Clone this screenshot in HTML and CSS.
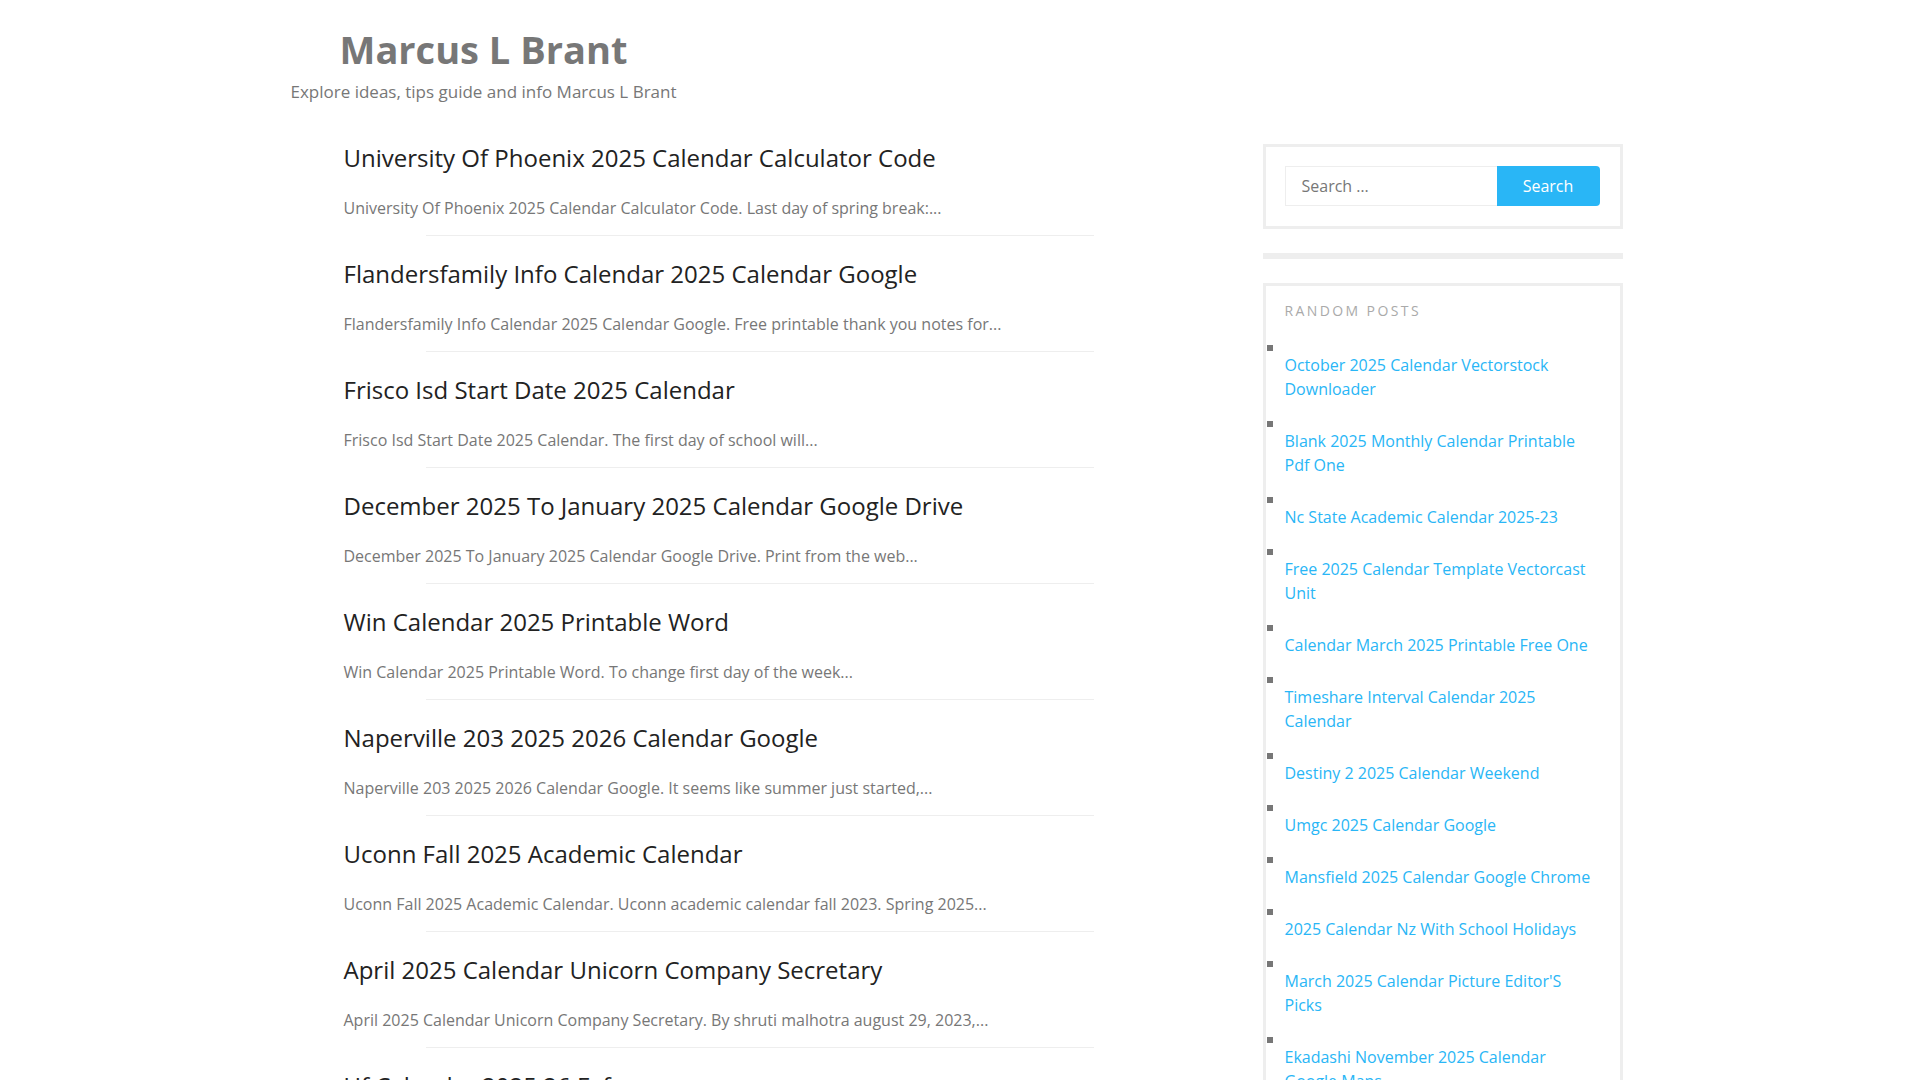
FILE: index.html
```html
<!DOCTYPE html>
<html>
<head>
    <meta charset="utf-8" />
    <title>Marcus L Brant</title>
    <link rel="stylesheet" href="styles.css">
</head>
<body>
    <div class="site">
        <header class="site-header">
            <div class="branding">
                <h1 class="site-title"><a href="#">Marcus L Brant</a></h1>
                <p class="site-description">Explore ideas, tips guide and info Marcus L Brant</p>
            </div>
        </header>

        <div class="content">
            <main class="main">
                <article class="post">
                    <h2 class="post-title"><a href="#">University Of Phoenix 2025 Calendar Calculator Code</a></h2>
                    <p class="post-excerpt">University Of Phoenix 2025 Calendar Calculator Code. Last day of spring break:...</p>
                </article>
                <article class="post">
                    <h2 class="post-title"><a href="#">Flandersfamily Info Calendar 2025 Calendar Google</a></h2>
                    <p class="post-excerpt">Flandersfamily Info Calendar 2025 Calendar Google. Free printable thank you notes for...</p>
                </article>
                <article class="post">
                    <h2 class="post-title"><a href="#">Frisco Isd Start Date 2025 Calendar</a></h2>
                    <p class="post-excerpt">Frisco Isd Start Date 2025 Calendar. The first day of school will...</p>
                </article>
                <article class="post">
                    <h2 class="post-title"><a href="#">December 2025 To January 2025 Calendar Google Drive</a></h2>
                    <p class="post-excerpt">December 2025 To January 2025 Calendar Google Drive. Print from the web...</p>
                </article>
                <article class="post">
                    <h2 class="post-title"><a href="#">Win Calendar 2025 Printable Word</a></h2>
                    <p class="post-excerpt">Win Calendar 2025 Printable Word. To change first day of the week...</p>
                </article>
                <article class="post">
                    <h2 class="post-title"><a href="#">Naperville 203 2025 2026 Calendar Google</a></h2>
                    <p class="post-excerpt">Naperville 203 2025 2026 Calendar Google. It seems like summer just started,...</p>
                </article>
                <article class="post">
                    <h2 class="post-title"><a href="#">Uconn Fall 2025 Academic Calendar</a></h2>
                    <p class="post-excerpt">Uconn Fall 2025 Academic Calendar. Uconn academic calendar fall 2023. Spring 2025...</p>
                </article>
                <article class="post">
                    <h2 class="post-title"><a href="#">April 2025 Calendar Unicorn Company Secretary</a></h2>
                    <p class="post-excerpt">April 2025 Calendar Unicorn Company Secretary. By shruti malhotra august 29, 2023,...</p>
                </article>
                <article class="post">
                    <h2 class="post-title"><a href="#">Uf Calendar 2025 26 Fafsa</a></h2>
                    <p class="post-excerpt">Uf Calendar 2025 26 Fafsa. The academic year calendar for students...</p>
                </article>
            </main>

            <aside class="sidebar">
                <section class="widget widget-search">
                    <form class="search-form">
                        <input type="search" class="search-field" placeholder="Search &hellip;">
                        <button type="submit" class="search-submit">Search</button>
                    </form>
                </section>

                <div class="widget-divider"></div>

                <section class="widget widget-random">
                    <h3 class="widget-title">Random Posts</h3>
                    <ul class="random-list">
                        <li><i class="sq"></i><a href="#">October 2025 Calendar Vectorstock Downloader</a></li>
                        <li><i class="sq"></i><a href="#">Blank 2025 Monthly Calendar Printable Pdf One</a></li>
                        <li><i class="sq"></i><a href="#">Nc State Academic Calendar 2025-23</a></li>
                        <li><i class="sq"></i><a href="#">Free 2025 Calendar Template Vectorcast Unit</a></li>
                        <li><i class="sq"></i><a href="#">Calendar March 2025 Printable Free One</a></li>
                        <li><i class="sq"></i><a href="#">Timeshare Interval Calendar 2025 Calendar</a></li>
                        <li><i class="sq"></i><a href="#">Destiny 2 2025 Calendar Weekend</a></li>
                        <li><i class="sq"></i><a href="#">Umgc 2025 Calendar Google</a></li>
                        <li><i class="sq"></i><a href="#">Mansfield 2025 Calendar Google Chrome</a></li>
                        <li><i class="sq"></i><a href="#">2025 Calendar Nz With School Holidays</a></li>
                        <li><i class="sq"></i><a href="#">March 2025 Calendar Picture Editor'S Picks</a></li>
                        <li><i class="sq"></i><a href="#">Ekadashi November 2025 Calendar Google Maps</a></li>
                    </ul>
                </section>
            </aside>
        </div>
    </div>
</body>
</html>
```

FILE: styles.css
```css
body {
    margin: 0;
    padding: 0 15px 0 0;
    font-family: "Open Sans", "Liberation Sans", sans-serif;
    color: #222;
    background: #fff;
}
a {
    color: inherit;
    text-decoration: none;
}
.site {
    width: 1340px;
    margin: 0 auto;
}

/* header */
.site-header {
    padding-top: 26px;
}
.branding {
    width: 402px;
    text-align: center;
    white-space: nowrap;
}
.site-title {
    margin: 0;
    font-size: 38px;
    line-height: 46px;
    font-weight: 700;
    color: #777;
}
.site-description {
    margin: 7px 0 0;
    font-size: 17px;
    line-height: 26px;
    color: #777;
}

/* layout */
.content {
    display: flex;
    align-items: flex-start;
    margin-top: 35px;
}
.main {
    flex: 1;
    padding: 0 87px 0 61px;
}
.sidebar {
    width: 360px;
    margin-top: 4px;
}

/* posts */
.post {
    padding-bottom: 15px;
    margin-bottom: 20px;
    position: relative;
}
.post::after {
    content: "";
    display: block;
    height: 1px;
    background: #eee;
    margin: 0 82px;
    position: relative;
    top: 15px;
}
.post-title {
    margin: 0;
    font-size: 24px;
    line-height: 36px;
    font-weight: 400;
    color: #222;
}
.post-excerpt {
    margin: 20px 0 0;
    font-size: 16px;
    line-height: 24px;
    color: #777;
}

/* widgets */
.widget {
    border: 3px solid #eee;
}
.widget-search {
    padding: 19px 20px 20px 19px;
}
.search-form {
    display: flex;
}
.search-field {
    flex: 1;
    min-width: 0;
    height: 40px;
    box-sizing: border-box;
    border: 1px solid #eee;
    border-right: 0;
    padding: 0 16px;
    font-family: inherit;
    font-size: 16px;
    color: #777;
    outline: none;
}
.search-field::placeholder {
    color: #777;
}
.search-submit {
    width: 103px;
    height: 40px;
    border: 0;
    border-radius: 0 4px 4px 0;
    background: #29b6f6;
    color: #fff;
    font-family: inherit;
    font-size: 16px;
}
.widget-divider {
    height: 6px;
    background: #eee;
    margin: 24px 0;
}
.widget-random {
    padding: 14px 20px 20px 19px;
}
.widget-title {
    margin: 0;
    font-size: 14px;
    line-height: 21px;
    font-weight: 400;
    letter-spacing: 2.4px;
    text-transform: uppercase;
    color: #aaa;
}
.random-list {
    list-style: none;
    margin: 24px 0 0;
    padding: 0;
}
.random-list li {
    margin-bottom: 20px;
}
.sq {
    display: block;
    width: 6px;
    height: 6px;
    margin: 0 0 2px -18px;
    background: #777;
}
.random-list a {
    display: block;
    font-size: 16px;
    line-height: 24px;
    color: #29b6f6;
}
```
